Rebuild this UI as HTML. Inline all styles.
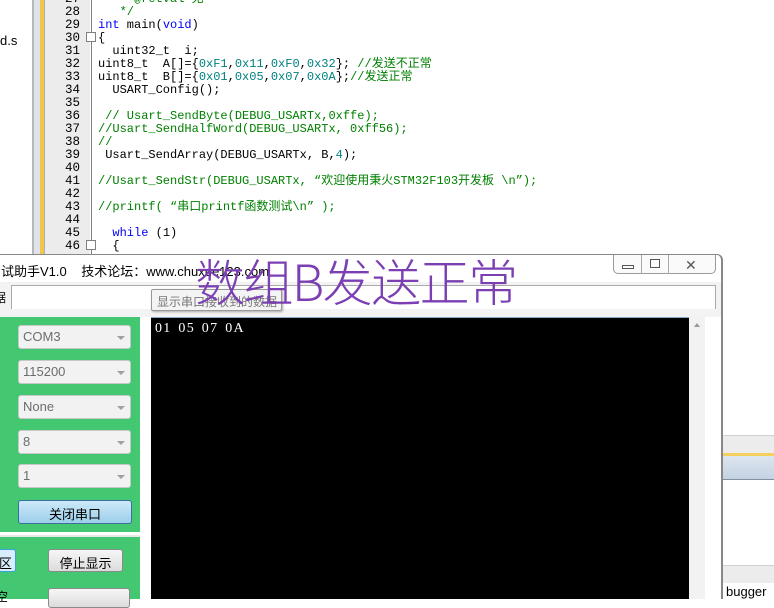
<!DOCTYPE html>
<html><head><meta charset="utf-8"><style>
*{margin:0;padding:0;box-sizing:border-box}
body{width:774px;height:599px;overflow:hidden;background:#fff;position:relative;font-family:"Liberation Sans","Noto Sans CJK SC",sans-serif}
.a{position:absolute}
.code{font-family:"Liberation Mono","Noto Sans CJK SC",monospace;font-size:12px;line-height:13px;white-space:pre;color:#000}
.ln{font-family:"Liberation Mono",monospace;font-size:12.5px;line-height:13px;text-align:right;width:36px;color:#000}
.g{color:#008000}.b{color:#0000ff}.t{color:#008080}
.combo{position:absolute;left:18px;width:113px;height:24px;background:#f2f2f2;border:1px solid #c8c8c8;border-radius:3px;font-size:13px;color:#6d6d6d;padding:3px 0 0 4px}
.combo:after{content:"";position:absolute;right:5px;top:10px;border-left:4px solid transparent;border-right:4px solid transparent;border-top:4px solid #a0a0a0}
.btn{position:absolute;border:1px solid #8a8a8a;border-radius:3px;background:linear-gradient(#f6f6f6,#dcdcdc);font-size:13px;text-align:center;color:#000}
</style></head><body>
<div class="a" style="left:32px;top:0;width:2px;height:260px;background:#b8b8b8"></div>
<div class="a" style="left:34px;top:0;width:6px;height:260px;background:#dfe4ec"></div>
<div class="a" style="left:40px;top:0;width:4px;height:260px;background:#f3c64a"></div>
<div class="a" style="left:44px;top:0;width:46px;height:260px;background:#ececec;border-left:1px solid #b0b0b0"></div>
<div class="a" style="left:0;top:33px;font-size:13px">d.s</div>
<div class="a" style="left:91px;top:0;width:1px;height:255px;background:#808080"></div>
<div class="a" style="left:86px;top:32px;width:10px;height:10px;border:1px solid #808080;background:#fff"></div>
<div class="a" style="left:86px;top:240px;width:10px;height:10px;border:1px solid #808080;background:#fff"></div>
<div class="a ln" style="left:44px;top:-7px">27<br>28<br>29<br>30<br>31<br>32<br>33<br>34<br>35<br>36<br>37<br>38<br>39<br>40<br>41<br>42<br>43<br>44<br>45<br>46</div>
<div class="a code" style="left:98px;top:-7px"><span class="g">   * @retval 无
   */</span>
<span class="b">int</span> main(<span class="b">void</span>)
{
  uint32_t  i;
uint8_t  A[]={<span class="t">0xF1</span>,<span class="t">0x11</span>,<span class="t">0xF0</span>,<span class="t">0x32</span>}; <span class="g">//发送不正常</span>
uint8_t  B[]={<span class="t">0x01</span>,<span class="t">0x05</span>,<span class="t">0x07</span>,<span class="t">0x0A</span>};<span class="g">//发送正常</span>
  USART_Config();

<span class="g"> // Usart_SendByte(DEBUG_USARTx,0xffe);
//Usart_SendHalfWord(DEBUG_USARTx, 0xff56);
//</span>
 Usart_SendArray(DEBUG_USARTx, B,<span class="t">4</span>);

<span class="g">//Usart_SendStr(DEBUG_USARTx, “欢迎使用秉火STM32F103开发板 \n”);</span>

<span class="g">//printf( “串口printf函数测试\n” );</span>

  <span class="b">while</span> (1)
  {</div>
<div class="a" style="left:722px;top:435px;width:52px;height:20px;background:#ececec;border-top:1px solid #d0d0d0"></div>
<div class="a" style="left:722px;top:453px;width:52px;height:3px;background:#f5d060"></div>
<div class="a" style="left:722px;top:456px;width:52px;height:24px;background:linear-gradient(#dde6f0,#c4d2e2);border-bottom:1px solid #8090a0"></div>
<div class="a" style="left:722px;top:565px;width:52px;height:18px;background:#ececec;border-top:1px solid #d0d0d0"></div>
<div class="a" style="left:726px;top:584px;font-size:13px">bugger</div>
<div class="a" style="left:0;top:254px;width:723px;height:345px;background:#fff;border-right:2px solid #888;border-top:1px solid #888;border-radius:0 6px 0 0"></div>
<div class="a" style="left:-12px;top:261px;font-size:13px;white-space:nowrap">调试助手V1.0&nbsp;&nbsp;&nbsp;&nbsp;技术论坛：www.chuxue123.com</div>
<div class="a" style="left:613px;top:255px;width:103px;height:19px;border:1px solid #9a9a9a;border-top:none;border-radius:0 0 5px 5px;background:#fafafa"></div>
<div class="a" style="left:641px;top:255px;width:1px;height:19px;background:#aaa"></div>
<div class="a" style="left:668px;top:255px;width:1px;height:19px;background:#aaa"></div>
<div class="a" style="left:622px;top:265px;width:12px;height:4px;border:1px solid #555"></div>
<div class="a" style="left:650px;top:259px;width:10px;height:9px;border:1px solid #555"></div>
<div class="a" style="left:685px;top:257px;font-size:14px;color:#555">✕</div>
<div class="a" style="left:0;top:282px;width:721px;height:35px;background:#f3f3f3"></div>
<div class="a" style="left:11px;top:285px;width:705px;height:24px;background:#fff;border:1px solid #aaa;border-bottom:none"></div>
<div class="a" style="left:-6px;top:289px;font-size:12px">据</div>
<div class="a" style="left:151px;top:289px;width:131px;height:22px;background:#f4f4f4;border:1px solid #999;border-radius:2px;box-shadow:1px 1px 2px #aaa;font-size:12px;color:#777;padding:3px 0 0 5px">显示串口接收到的数据</div>
<div class="a" style="left:0;top:317px;width:140px;height:215px;background:#43c770"></div>
<div class="a" style="left:0;top:535px;width:140px;height:64px;background:#43c770;border-top:2px solid #e8e8e8"></div>
<div class="combo" style="top:325px">COM3</div>
<div class="combo" style="top:360px">115200</div>
<div class="combo" style="top:395px">None</div>
<div class="combo" style="top:430px">8</div>
<div class="combo" style="top:464px">1</div>
<div class="btn" style="left:18px;top:500px;width:114px;height:24px;background:linear-gradient(#cde9f8,#9ccfeb);border-color:#3c6f9e;padding-top:3px">关闭串口</div>
<div class="btn" style="left:-6px;top:549px;width:22px;height:23px;background:#d8eefa;border-color:#3aa0e0;padding-top:3px;text-align:left;padding-left:4px">区</div>
<div class="btn" style="left:48px;top:549px;width:75px;height:23px;padding-top:3px">停止显示</div>
<div class="btn" style="left:48px;top:588px;width:82px;height:20px"></div>
<div class="a" style="left:-4px;top:588px;font-size:12px">空</div>
<div class="a" style="left:151px;top:317px;width:538px;height:282px;background:#000;border-top:1px solid #8aa8c8"></div>
<div class="a" style="left:155px;top:321px;color:#fff;font-family:'Liberation Serif',serif;font-size:14px;letter-spacing:1.3px;word-spacing:2px">01 05 07 0A</div>
<div class="a" style="left:689px;top:317px;width:16px;height:282px;background:#f2f2f2"></div>
<div class="a" style="left:694px;top:323px;border-left:3px solid transparent;border-right:3px solid transparent;border-bottom:4px solid #999"></div>
<div class="a" style="left:705px;top:317px;width:16px;height:282px;background:#fff"></div>
<div class="a" style="left:195px;top:248px;font-family:'Noto Sans CJK SC',sans-serif;font-weight:300;font-size:50px;line-height:64px;color:#7b3fb3;white-space:nowrap;letter-spacing:-1.5px">数组B发送正常</div>
</body></html>
